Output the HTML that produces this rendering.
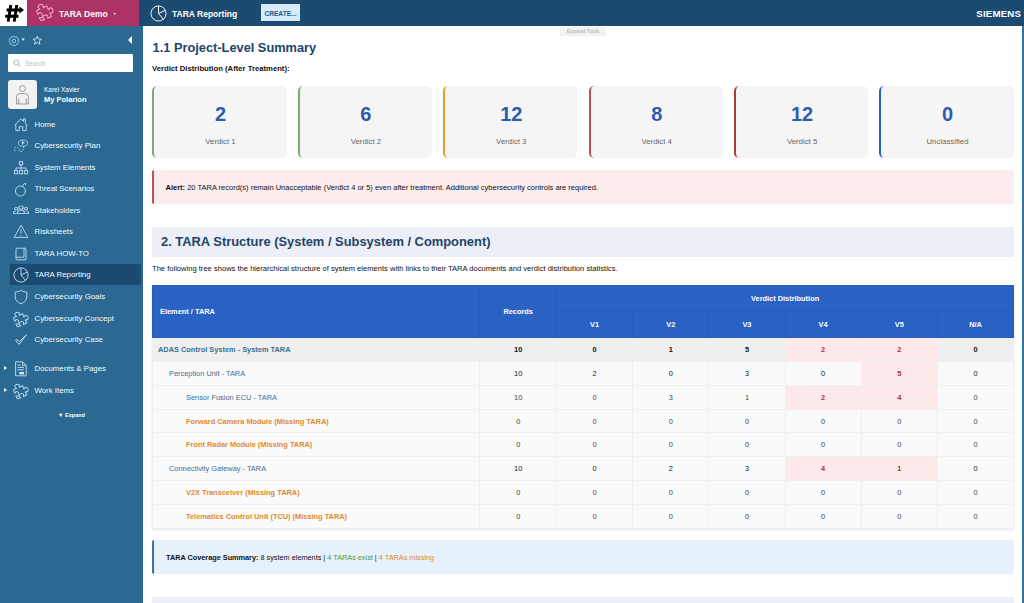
<!DOCTYPE html>
<html><head><meta charset="utf-8">
<style>
*{box-sizing:border-box;margin:0;padding:0}
html,body{width:1024px;height:603px;overflow:hidden;background:#fff;font-family:"Liberation Sans",sans-serif;}
body{position:relative}
#top{position:absolute;left:0;top:0;width:1024px;height:26px;background:#1d4a70}
#logo{position:absolute;left:0;top:0;width:27px;height:26px;overflow:hidden;background:#fff;color:#000;font-weight:bold;font-size:25px;line-height:27px;text-align:center}
#proj{position:absolute;left:27px;top:0;width:112px;height:26px;background:#ad3266;color:#fff;font-weight:bold;font-size:8.5px;line-height:28px}
#proj span.t{position:absolute;left:32px;top:0}
#proj span.c{position:absolute;left:86px;top:0;font-size:3.5px}
#ttl{position:absolute;left:172px;top:0;color:#fff;font-weight:bold;font-size:8.5px;line-height:28px}
#create{position:absolute;left:261px;top:4px;width:39px;height:17px;background:#d6ecfa;color:#1d5a85;font-weight:bold;font-size:6.6px;line-height:19px;text-align:center}
#siemens{position:absolute;right:3px;top:0;color:#fff;font-weight:bold;font-size:9.7px;line-height:27px;letter-spacing:0.15px}
#side{position:absolute;left:0;top:27px;width:143px;height:576px;background:#2b6992}
#search{position:absolute;left:8px;top:27px;width:125px;height:18px;background:#fff;border-radius:1px;color:#b9c2cc;font-size:6.4px;line-height:19.5px;padding-left:17px}
#avatar{position:absolute;left:8px;top:53px;width:29px;height:29px;background:#f3f3f3;border-radius:3px}
.un{position:absolute;left:44px;top:58.5px;color:#fff;font-size:6.5px;line-height:8px}
.mp{position:absolute;left:44px;top:68.4px;color:#fff;font-size:7.5px;font-weight:bold;line-height:9px}
.nav{position:absolute;left:0;width:143px;height:21px;color:#f4f9fc;font-size:7.85px;line-height:21px;padding-left:34.5px;white-space:nowrap}
.nav.sel{left:10px;width:130.5px;padding-left:24.5px;background:#1d4a70}
.nav svg{position:absolute;left:13px;top:2.5px;width:16px;height:16px;fill:none;stroke:#b2d6ee;stroke-width:1}
.nav.sel svg{left:3px}
#expand{position:absolute;left:0;top:384.5px;width:143px;text-align:center;color:#fff;font-size:5.5px;font-weight:bold}
#rb{position:absolute;left:1022px;top:26px;width:2px;height:577px;background:#3573a0}
#lb{position:absolute;left:0;top:26px;width:143px;height:1px;background:#2b6992}
#main{position:absolute;left:144px;top:27px;width:878px;height:576px;background:#fff;overflow:hidden}
h1{position:absolute;left:8.6px;top:11.6px;font-size:12.8px;color:#224469;font-weight:bold;line-height:18px;white-space:nowrap}
.sub{position:absolute;left:8px;top:37.3px;font-size:7.7px;font-weight:bold;color:#111;white-space:nowrap}
.card{position:absolute;top:59px;width:134.2px;height:72px;background:#f5f5f5;border-radius:5px;border-left:2px solid #74ad6c;text-align:center}
.card b{display:block;margin-top:16px;font-size:20px;line-height:24px;color:#2a5db0}
.card span{display:block;margin-top:10.5px;font-size:7.8px;color:#666}
#alert{position:absolute;left:8px;top:142.5px;width:862px;height:34.3px;background:#fdecee;border-left:2px solid #c0504d;border-radius:2px;font-size:7.5px;line-height:36px;padding-left:11.5px;color:#111;white-space:nowrap}
#h2{position:absolute;left:8px;top:200px;width:862px;height:30px;background:#eceff5;border-radius:2px;font-size:12.9px;font-weight:bold;color:#224469;line-height:30px;padding-left:9px;white-space:nowrap}
.desc{position:absolute;left:8px;top:236.7px;font-size:7.58px;color:#111;white-space:nowrap}
table{position:absolute;left:8px;top:258px;width:861.2px;border-collapse:collapse;font-size:7.4px;table-layout:fixed;box-shadow:0 1px 2px rgba(0,0,0,.10)}
th{background:#2a62c4;color:#fff;font-weight:bold;height:26px;border:1px solid #2a5cb6;text-align:center}
th.l{text-align:left;padding-left:7px}
td{height:23.86px;text-align:center;border:1px solid #f0f0f0;color:#444;background:#fafafa}
td.l{text-align:left}
tr.r0 td{background:#efefef;font-weight:bold;color:#111}
tr.r1 td{color:#111}
td.red{background:#fde8ea !important;color:#b03030 !important;font-weight:bold}
a{text-decoration:none}
.lk{color:#3a6f94}
.ms{color:#e08a2e;font-weight:bold}
#cov{position:absolute;left:8px;top:512.5px;width:861.5px;height:34px;background:#e6f1fb;border-left:2px solid #3f6fb0;border-radius:2px;font-size:7.3px;line-height:36.5px;padding-left:12px;white-space:nowrap;color:#111}
#next{position:absolute;left:8px;top:570px;width:862px;height:10px;background:#eceff5}

#logo svg{display:block}
.pz{position:absolute;left:8.5px;top:3px;width:18px;height:18px;fill:none;stroke:#f3a0c6;stroke-width:.95}
#tpie{position:absolute;left:150px;top:4.5px;width:17px;height:17px;fill:none;stroke:#fff;stroke-width:.9}
#gear{position:absolute;left:7.5px;top:7.5px;width:12px;height:12px;fill:none;stroke:#a5d2f2;stroke-width:1.15}
#gcar{position:absolute;left:21px;top:10.5px;font-size:4.2px;color:#fff;line-height:4px}
#star{position:absolute;left:32px;top:8.3px;width:10.5px;height:10.5px;fill:none;stroke:#c9e4f7;stroke-width:1.4}
#coll{position:absolute;left:128px;top:9px;width:0;height:0;border-right:4.5px solid #fff;border-top:4.5px solid transparent;border-bottom:4.5px solid transparent}
#search svg{position:absolute;left:4.5px;top:5px;width:8.5px;height:8.5px;fill:none;stroke:#bcc6d0;stroke-width:1.4}
#avatar svg{width:29px;height:29px;fill:none;stroke:#8f8f8f;stroke-width:.9}
.tri{position:absolute;left:4px;width:0;height:0;border-left:3px solid #fff;border-top:2.5px solid transparent;border-bottom:2.5px solid transparent}
#sep{position:absolute;left:8px;top:326px;width:127px;height:1px;background:#316d97}
#et{position:absolute;left:416px;top:0;width:46px;height:9px;background:#f2f2f2;color:#a8a8a8;font-size:5.4px;line-height:8.5px;text-align:center}
</style></head><body>
<div id="top">
<div id="logo"><svg viewBox="0 0 27 27" width="27" height="27"><path d="M10.8 5L8.2 21.6M16.8 5L14.2 21.6M6.6 10H21M5.2 16.2H18.4" stroke="#000" stroke-width="2.9" fill="none"/><path d="M19.4 6.4L24 10L19.4 13.6Z" fill="#000"/></svg></div>
<div id="proj"><svg class="pz" viewBox="0 0 16 16"><path transform="translate(7.8 7.3) rotate(-24) scale(1.02) translate(-10.6 -9.4)" d="M4 6H7.5C7.5 6 6.5 4.5 6.8 3.6C7.2 2.2 10.8 2.2 11.2 3.6C11.5 4.5 10.5 6 10.5 6H14V9.5C14 9.5 15.5 8.5 16.4 8.8C17.8 9.2 17.8 12.8 16.4 13.2C15.5 13.5 14 12.5 14 12.5V16H10.5C10.5 16 11.5 14.5 11.2 13.6C10.8 12.2 7.2 12.2 6.8 13.6C6.5 14.5 7.5 16 7.5 16H4V12.5C4 12.5 5.5 13.5 6.4 13.2C7.8 12.8 7.8 9.2 6.4 8.8C5.5 8.5 4 9.5 4 9.5Z" stroke-linejoin="round"/></svg><span class="t">TARA Demo</span><span class="c">▼</span></div>
<svg id="tpie" viewBox="0 0 16 16"><circle cx="8" cy="8" r="7.1"/><path d="M8 .9V8L12.6 13.4M8 8L14.4 5"/></svg><div id="ttl">TARA Reporting</div>
<div id="create">CREATE...</div>
<div id="siemens">SIEMENS</div>
</div>
<div id="side">
<svg id="gear" viewBox="0 0 16 16"><path d="M8 1.6L9.6 2.6L11.6 2.4L12.4 4.2L14.2 5.2L13.8 7.2L14.6 9L13.2 10.4L13 12.4L11 12.8L9.6 14.2L8 13.4L6.4 14.2L5 12.8L3 12.4L2.8 10.4L1.4 9L2.2 7.2L1.8 5.2L3.6 4.2L4.4 2.4L6.4 2.6Z" stroke-linejoin="round"/><circle cx="8" cy="8" r="2.4"/></svg><div id="gcar">▼</div><svg id="star" viewBox="0 0 16 16"><path d="M8 1.8L9.8 6L14.4 6.4L10.9 9.4L12 14L8 11.5L4 14L5.1 9.4L1.6 6.4L6.2 6Z" stroke-linejoin="round"/></svg><div id="coll"></div><div id="search"><svg viewBox="0 0 10 10"><circle cx="4" cy="4" r="2.8"/><path d="M6 6L9 9"/></svg>Search</div>
<div id="avatar"><svg viewBox="0 0 29 29"><circle cx="14.5" cy="8.6" r="3"/><path d="M8.6 24V16.5Q8.6 13.6 11.5 13.6H17.5Q20.4 13.6 20.4 16.5V24ZM10.8 24V18.6M18.2 24V18.6"/></svg></div>
<div class="un">Karel Xavier</div><div class="mp">My Polarion</div>
<div class="nav" style="top:87px"><svg viewBox="0 0 16 16"><path d="M2.8 7.6V13.6H6.3V9.6H9.7V13.6H13.2V7.6M1.8 8.2L7.8 1.8L10.4 4.4V1.8H12.4V6.4L14.2 8.2"/></svg>Home</div>
<div class="nav" style="top:108px"><svg viewBox="0 0 16 16"><ellipse cx="10" cy="5.2" rx="4.7" ry="3.1" opacity=".8"/><path d="M9.3 3.6V7M9.3 3.6L11.6 4.7L9.3 5.8Z" fill="#d6ecfa" stroke-width=".7"/><path d="M10.6 8.4C11 11 9.6 13.8 8 13.6C6.4 13.4 6 10.8 4.5 9.4C3.4 8.4 1.4 9 1.4 10.6C1.4 12 1.9 13 2.3 14" stroke-dasharray="1.6 1.1" opacity=".85"/></svg>Cybersecurity Plan</div>
<div class="nav" style="top:130px"><svg viewBox="0 0 16 16"><rect x="6.4" y="1.6" width="3.2" height="3.2"/><path d="M8 4.8V8M3 10.6V8H13V10.6M8 8V10.6"/><rect x="1.4" y="10.6" width="3.2" height="3.2"/><rect x="6.4" y="10.6" width="3.2" height="3.2"/><rect x="11.4" y="10.6" width="3.2" height="3.2"/></svg>System Elements</div>
<div class="nav" style="top:151px"><svg viewBox="0 0 16 16"><circle cx="7.4" cy="10" r="5"/><path d="M9.6 5.5C10.4 3.2 11.6 2 13 2.6C13.6 3 13 3.8 12.2 3.4"/></svg>Threat Scenarios</div>
<div class="nav" style="top:173px"><svg viewBox="0 0 16 16"><g transform="translate(8 8) scale(1.1 .86) translate(-8 -8.6)"><circle cx="8" cy="4.6" r="2"/><path d="M4.8 11.6C4.8 8.6 6 7.4 8 7.4S11.2 8.6 11.2 11.6Z"/><circle cx="3.6" cy="6" r="1.5"/><path d="M1 11.6C1 9.4 2 8.4 3.6 8.4"/><circle cx="12.4" cy="6" r="1.5"/><path d="M15 11.6C15 9.4 14 8.4 12.4 8.4M.6 11.6H15.4"/></g></svg>Stakeholders</div>
<div class="nav" style="top:194px"><svg viewBox="0 0 16 16"><path d="M8 1.2L14.8 13.4H1.2Z" stroke-linejoin="round"/><path d="M8 5.4V9.8M8 11V12"/></svg>Risksheets</div>
<div class="nav" style="top:216px"><svg viewBox="0 0 16 16"><path d="M4 2.2H12.2Q13 2.2 13 3V13Q13 13.8 12.2 13.8H4Q3 13.8 3 12.6V3.4Q3 2.2 4 2.2ZM3 12.4Q3 11.2 4.2 11.2H11V2.2"/></svg>TARA HOW-TO</div>
<div class="nav sel" style="top:237px"><svg viewBox="0 0 16 16"><circle cx="8" cy="8" r="7.1"/><path d="M8 .9V8L12.6 13.4M8 8L14.4 5"/></svg>TARA Reporting</div>
<div class="nav" style="top:259px"><svg viewBox="0 0 16 16"><path d="M8 1.4C6.4 2.6 4 3 2.2 3V8C2.2 11.4 5 13.6 8 14.8C11 13.6 13.8 11.4 13.8 8V3C12 3 9.6 2.6 8 1.4Z" stroke-linejoin="round"/></svg>Cybersecurity Goals</div>
<div class="nav" style="top:281px"><svg viewBox="0 0 16 16"><path transform="translate(7.8 7.3) rotate(-24) scale(1.02) translate(-10.6 -9.4)" d="M4 6H7.5C7.5 6 6.5 4.5 6.8 3.6C7.2 2.2 10.8 2.2 11.2 3.6C11.5 4.5 10.5 6 10.5 6H14V9.5C14 9.5 15.5 8.5 16.4 8.8C17.8 9.2 17.8 12.8 16.4 13.2C15.5 13.5 14 12.5 14 12.5V16H10.5C10.5 16 11.5 14.5 11.2 13.6C10.8 12.2 7.2 12.2 6.8 13.6C6.5 14.5 7.5 16 7.5 16H4V12.5C4 12.5 5.5 13.5 6.4 13.2C7.8 12.8 7.8 9.2 6.4 8.8C5.5 8.5 4 9.5 4 9.5Z" stroke-linejoin="round"/></svg>Cybersecurity Concept</div>
<div class="nav" style="top:302px"><svg viewBox="0 0 16 16"><path d="M2.6 8.4L6 12.4L13.6 2.6L6.4 9.6L4 7.4Z" stroke-linejoin="round"/></svg>Cybersecurity Case</div>
<div class="nav" style="top:331px"><svg viewBox="0 0 16 16"><path d="M2.6 .8H9.6L13.2 4.4V14.8H2.6ZM9.6 .8V4.4H13.2M4.6 4H7.6M4.6 6.4H11M4.6 8.8H11"/><rect x="6.4" y="11" width="4.6" height="2.4" fill="#d6ecfa" stroke="none"/></svg>Documents &amp; Pages</div>
<div class="nav" style="top:353px"><svg viewBox="0 0 16 16"><path transform="translate(7.8 7.3) rotate(-24) scale(1.02) translate(-10.6 -9.4)" d="M4 6H7.5C7.5 6 6.5 4.5 6.8 3.6C7.2 2.2 10.8 2.2 11.2 3.6C11.5 4.5 10.5 6 10.5 6H14V9.5C14 9.5 15.5 8.5 16.4 8.8C17.8 9.2 17.8 12.8 16.4 13.2C15.5 13.5 14 12.5 14 12.5V16H10.5C10.5 16 11.5 14.5 11.2 13.6C10.8 12.2 7.2 12.2 6.8 13.6C6.5 14.5 7.5 16 7.5 16H4V12.5C4 12.5 5.5 13.5 6.4 13.2C7.8 12.8 7.8 9.2 6.4 8.8C5.5 8.5 4 9.5 4 9.5Z" stroke-linejoin="round"/></svg>Work Items</div>
<div id="sep"></div><div class="tri" style="top:339px"></div><div class="tri" style="top:360.5px"></div><div id="expand">▼ Expand</div>
</div>
<div id="lb"></div><div id="rb"></div>
<div id="main">
<div id="et">Expand Tools</div>
<h1>1.1 Project-Level Summary</h1>
<div class="sub">Verdict Distribution (After Treatment):</div>
<div class="card" style="left:8.4px"><b>2</b><span>Verdict 1</span></div>
<div class="card" style="left:153.8px"><b>6</b><span>Verdict 2</span></div>
<div class="card" style="left:299.2px;border-color:#e0a030"><b>12</b><span>Verdict 3</span></div>
<div class="card" style="left:444.6px;border-color:#c0504d"><b>8</b><span>Verdict 4</span></div>
<div class="card" style="left:590px;border-color:#b03a30"><b>12</b><span>Verdict 5</span></div>
<div class="card" style="left:735.4px;border-color:#2a62c4"><b>0</b><span>Unclassified</span></div>
<div id="alert"><b>Alert:</b> 20 TARA record(s) remain Unacceptable (Verdict 4 or 5) even after treatment. Additional cybersecurity controls are required.</div>
<div id="h2">2. TARA Structure (System / Subsystem / Component)</div>
<div class="desc">The following tree shows the hierarchical structure of system elements with links to their TARA documents and verdict distribution statistics.</div>
<table>
<colgroup><col style="width:327.4px"><col style="width:76.6px"><col style="width:76.2px"><col style="width:76.2px"><col style="width:76.2px"><col style="width:76.2px"><col style="width:76.2px"><col style="width:76.2px"></colgroup>
<tr><th class="l" rowspan="2">Element / TARA</th><th rowspan="2">Records</th><th colspan="6">Verdict Distribution</th></tr>
<tr><th>V1</th><th>V2</th><th>V3</th><th>V4</th><th>V5</th><th>N/A</th></tr>
<tr class="r0"><td class="l" style="padding-left:5px"><span class="lk">ADAS Control System - System TARA</span></td><td>10</td><td>0</td><td>1</td><td>5</td><td class="red">2</td><td class="red">2</td><td>0</td></tr>
<tr class="r1"><td class="l" style="padding-left:16px"><span class="lk">Perception Unit - TARA</span></td><td>10</td><td>2</td><td>0</td><td>3</td><td>0</td><td class="red">5</td><td>0</td></tr>
<tr><td class="l" style="padding-left:33px"><span class="lk">Sensor Fusion ECU - TARA</span></td><td>10</td><td>0</td><td>3</td><td>1</td><td class="red">2</td><td class="red">4</td><td>0</td></tr>
<tr><td class="l" style="padding-left:33px"><span class="ms">Forward Camera Module (Missing TARA)</span></td><td>0</td><td>0</td><td>0</td><td>0</td><td>0</td><td>0</td><td>0</td></tr>
<tr><td class="l" style="padding-left:33px"><span class="ms">Front Radar Module (Missing TARA)</span></td><td>0</td><td>0</td><td>0</td><td>0</td><td>0</td><td>0</td><td>0</td></tr>
<tr class="r1"><td class="l" style="padding-left:16px"><span class="lk">Connectivity Gateway - TARA</span></td><td>10</td><td>0</td><td>2</td><td>3</td><td class="red">4</td><td class="red">1</td><td>0</td></tr>
<tr><td class="l" style="padding-left:33px"><span class="ms">V2X Transceiver (Missing TARA)</span></td><td>0</td><td>0</td><td>0</td><td>0</td><td>0</td><td>0</td><td>0</td></tr>
<tr><td class="l" style="padding-left:33px"><span class="ms">Telematics Control Unit (TCU) (Missing TARA)</span></td><td>0</td><td>0</td><td>0</td><td>0</td><td>0</td><td>0</td><td>0</td></tr>
</table>
<div id="cov"><b>TARA Coverage Summary:</b> 8 system elements | <span style="color:#4a9a4a">4 TARAs exist</span> | <span style="color:#e08a2e">4 TARAs missing</span></div>
<div id="next"></div>
</div>
</body></html>
